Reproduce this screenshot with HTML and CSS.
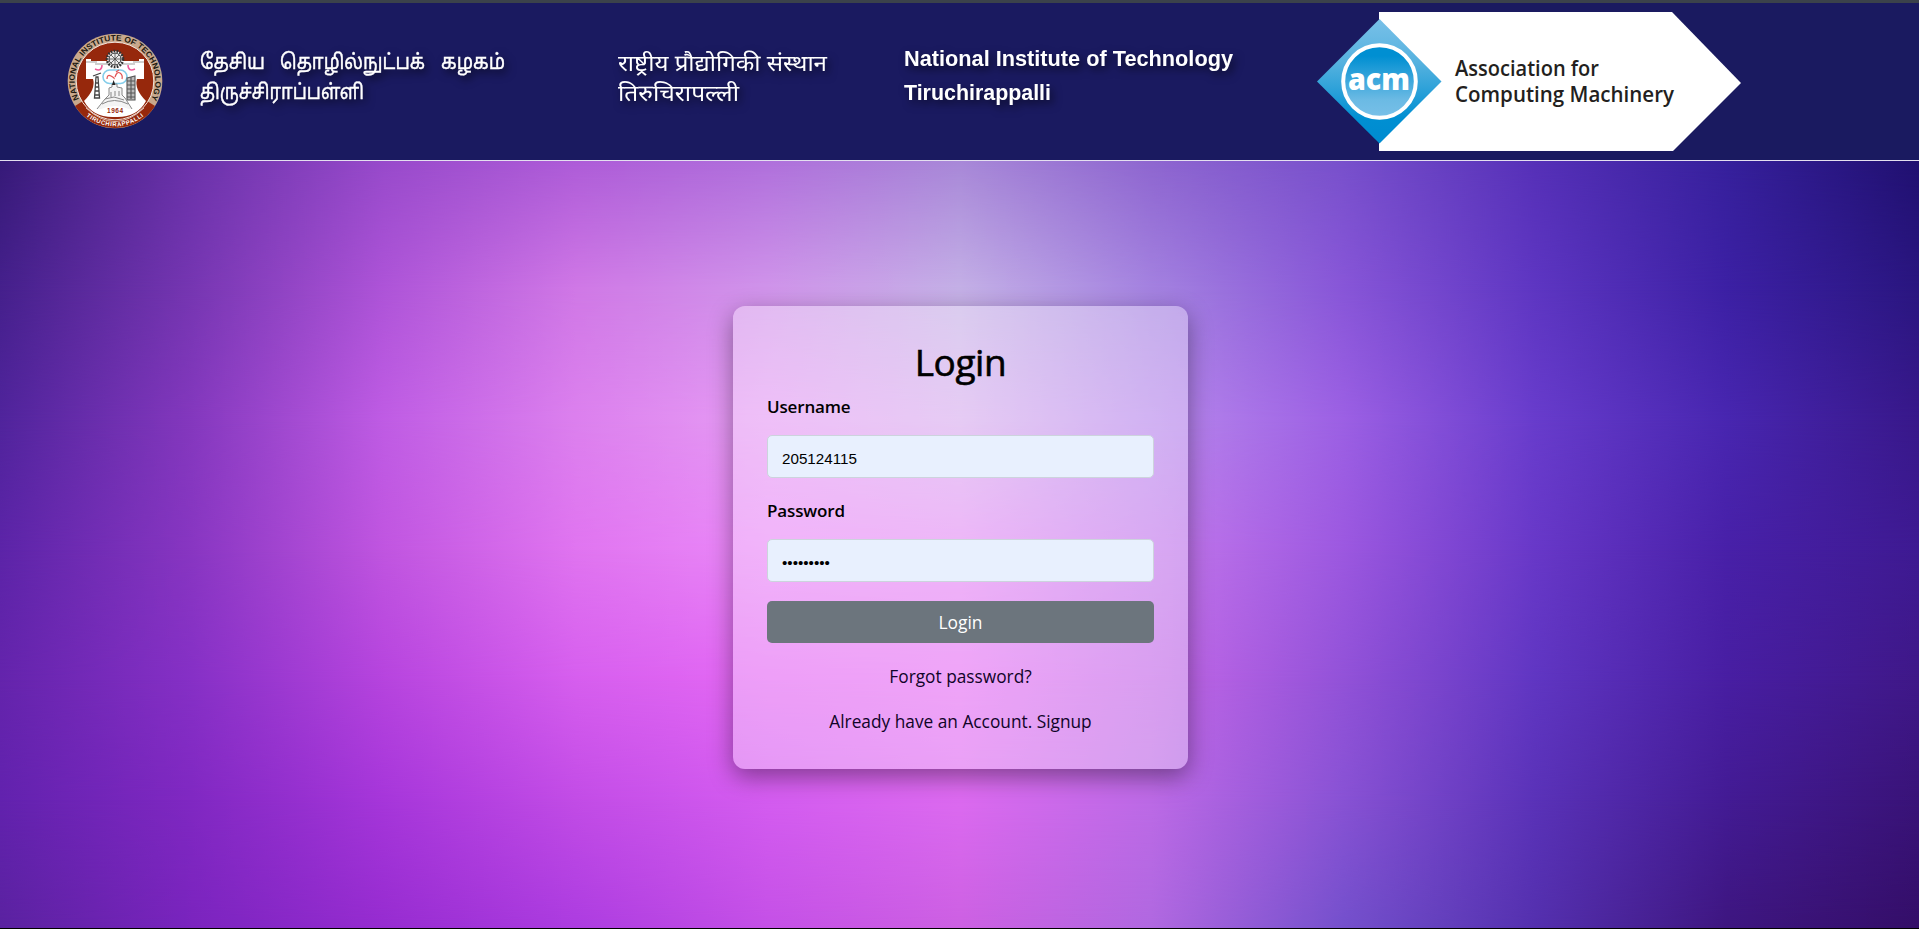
FILE: index.html
```html
<!DOCTYPE html>
<html lang="en">
<head>
<meta charset="utf-8">
<title>Login</title>
<link rel="stylesheet" href="styles.css">
</head>
<body>
<header class="banner">
  <svg class="seal" viewBox="0 0 96 96">
    <defs>
      <path id="arc-top" d="M12.500 67A40.300 40.300 0 1 1 83.500 67"/>
      <path id="arc-bottom" d="M10 72.500A45 45 0 0 0 86 72.500"/>
    </defs>
    <circle cx="48" cy="48" r="47.300" fill="#c8a88c"/>
    <path d="M8 73A47.300 47.300 0 0 0 88 73L80 68L16 68Z" fill="#96280c"/>
    <circle cx="48" cy="48" r="38.800" fill="#96280c" stroke="#f2e4dc" stroke-width="1"/>
    <path d="M19 26H24V28H72V26H77V46H70Q67 56 79 68Q70 85 48 84Q26 85 17 68Q29 56 26 46H19Z" fill="#fff"/>
    <path d="M19 29h11m36 0h11M28 31h40" stroke="#777" stroke-width=".7" fill="none"/>
    <circle cx="48" cy="26" r="8" fill="#fff" stroke="#333" stroke-width="2.600" stroke-dasharray="1.8 1.2"/>
    <circle cx="48" cy="26" r="6" fill="#eee" stroke="#333"/>
    <path d="M42 26h12M48 20v12M44 22l8 8M52 22l-8 8" stroke="#444" stroke-width=".8"/>
    <path d="M28 36q7 3 7-4M61 32q0 7 7 4" stroke="#ee5a9c" stroke-width="1.500" fill="none"/>
    <rect x="36" y="37" width="24" height="13.500" rx="6.700" fill="#fff" stroke="#84cdea" stroke-width="1.600"/>
    <path d="M40 46q0-5 4-3t3 3m1-2q2-6 5-4t2 6m-6-7 3-2" stroke="#e25454" stroke-width="1.200" fill="none"/>
    <path d="M29 44l-1.500 21h5l-1.500-21zM26 43l8-3M28 50h4M28 54h4M28 58h4M28 62h4" stroke="#444" stroke-width="1.300" fill="none"/>
    <path d="M60 45l8-2v24h-8zM60 48h8M60 52h8M60 56h8M60 60h8M60 64h8M64 44v22" stroke="#555" stroke-width="1.100" fill="#bbb"/>
    <path d="M30 76l8-10 4-4v-7l3-1v-3h5v3l5 1v7l3 3 7 11M38 66l9-2 10 3M35 71q12-7 26 0M44 59v5m4-6v5m4-5v5" stroke="#888" stroke-width="1" fill="#f4f4f4"/>
    <path d="M45 52l1.600-5 1.800 5z" fill="#222"/>
    <path d="M34 76q14-6 28 0v5q-14 4-28 0z" fill="#fff"/>
    <text class="seal-year" x="40" y="79.500" textLength="16">1964</text>
    <path d="M19 75Q48 102 77 75" fill="none" stroke="#f2e4dc" stroke-width=".8"/>
    <text class="seal-name"><textPath href="#arc-top" startOffset="1" textLength="164" lengthAdjust="spacingAndGlyphs">NATIONAL INSTITUTE OF TECHNOLOGY</textPath></text>
    <text class="seal-city"><textPath href="#arc-bottom" startOffset="14" textLength="62">TIRUCHIRAPPALLI</textPath></text>
  </svg>
  <svg class="name name-tamil" viewBox="0 0 320 90">
    <text x="0" y="34" textLength="65" lengthAdjust="spacingAndGlyphs">தேசிய</text>
    <text x="80" y="34" textLength="145" lengthAdjust="spacingAndGlyphs">தொழில்நுட்பக்</text>
    <text x="241" y="34" textLength="64" lengthAdjust="spacingAndGlyphs">கழகம்</text>
    <text x="0" y="63.500" textLength="164" lengthAdjust="spacingAndGlyphs">திருச்சிராப்பள்ளி</text>
  </svg>
  <svg class="name name-hindi" viewBox="0 0 230 90">
    <text x="0" y="35.500" textLength="209" lengthAdjust="spacingAndGlyphs">राष्ट्रीय प्रौद्योगिकी संस्थान</text>
    <text x="0" y="65.500" textLength="121" lengthAdjust="spacingAndGlyphs">तिरुचिरापल्ली</text>
  </svg>
  <svg class="name name-english" viewBox="0 0 350 90">
    <text x="0" y="31" textLength="329" lengthAdjust="spacingAndGlyphs">National Institute of Technology</text>
    <text x="0" y="65" textLength="147" lengthAdjust="spacingAndGlyphs">Tiruchirappalli</text>
  </svg>
  <svg class="acm" viewBox="0 0 424 139">
    <defs>
      <linearGradient id="diamond" x1="0" y1="0" x2="0" y2="1">
        <stop offset="0" stop-color="#78c0e8"/><stop offset=".35" stop-color="#56b2df"/>
        <stop offset=".8" stop-color="#008fd2"/><stop offset="1" stop-color="#008bd0"/>
      </linearGradient>
      <linearGradient id="disc" x1="0" y1="0" x2="0" y2="1">
        <stop offset=".15" stop-color="#008fd2"/><stop offset=".75" stop-color="#6bbae4"/><stop offset="1" stop-color="#78c0e8"/>
      </linearGradient>
    </defs>
    <path d="M62 0H355L424 71L356 139H62Z" fill="#fff"/>
    <path d="M62.500 7L124.500 69.500L62.500 131.500L0 69.500Z" fill="url(#diamond)"/>
    <circle cx="62.500" cy="69.500" r="36.300" fill="url(#disc)" stroke="#fff" stroke-width="4"/>
    <text class="acm-mark" x="31" y="77.500" textLength="62" lengthAdjust="spacingAndGlyphs">acm</text>
    <text class="acm-name" x="138" y="64" textLength="144" lengthAdjust="spacingAndGlyphs">Association for</text>
    <text class="acm-name" x="138" y="90" textLength="219" lengthAdjust="spacingAndGlyphs">Computing Machinery</text>
  </svg>
</header>
<main class="stage">
  <div class="glow glow-1"></div>
  <div class="glow glow-2"></div>
  <div class="glow glow-3"></div>
  <div class="glow glow-4"></div>
  <div class="glow glow-5"></div>
  <div class="glow glow-6"></div>
  <form class="card">
    <h1 class="title">Login</h1>
    <label class="label" for="user">Username</label>
    <input class="field" id="user" type="text" value="205124115">
    <label class="label label-pass" for="pass">Password</label>
    <input class="field" id="pass" type="password" value="123456789">
    <button class="submit" type="button">Login</button>
    <a class="link forgot">Forgot password?</a>
    <a class="link signup">Already have an Account. Signup</a>
  </form>
</main>
</body>
</html>
```
FILE: styles.css
```css
* { box-sizing: border-box; }
body {
  margin: 0;
  height: 929px;
  overflow: hidden;
  display: flex;
  flex-direction: column;
  background: #000;
  font-family: "Open Sans", "Noto Sans", sans-serif;
}
.banner {
  flex: none;
  height: 161px;
  display: flex;
  align-items: flex-start;
  background: #1a1a60;
  border-top: 3px solid #3b424b;
  border-bottom: 1px solid #e4dff0;
}
.banner svg { flex: none; display: block; overflow: visible; }
.seal { width: 96px; height: 96px; margin: 30px 0 0 67px; }
.seal text { font-family: "Liberation Sans", Arial, sans-serif; font-weight: 700; }
.seal-name { font-size: 8px; fill: #201810; }
.seal-city { font-size: 6px; fill: #fff; }
.seal-year { font-size: 6.5px; fill: #96280c; }
.name { height: 90px; margin-top: 32px; fill: #fff; filter: drop-shadow(3px 4px 4px rgba(0, 0, 0, .6)); }
.name-tamil { width: 320px; margin-left: 37px; font: 21px "Noto Sans Tamil", "Noto Sans", sans-serif; stroke: #fff; stroke-width: .4px; }
.name-hindi { width: 230px; margin-left: 98px; font: 23px "Noto Sans Devanagari", "Noto Sans", sans-serif; }
.name-english { width: 350px; margin-left: 56px; font: 700 22px "Liberation Sans", Arial, sans-serif; }
.acm { width: 424px; height: 139px; margin: 9px 0 0 63px; }
.acm-mark { font: 800 30px "Open Sans", sans-serif; fill: #fff; }
.acm-name { font: 600 22px "Open Sans", sans-serif; fill: #231f20; }

/* Colour field: each band is a horizontal ramp that fades in over the one above it. */
.stage {
  position: relative;
  height: 767px;
  display: flex;
  justify-content: center;
  align-items: flex-start;
  overflow: hidden;
  background: linear-gradient(90deg, #361a78, #6a32aa, #984acb, #ae5cd8, #b070dc, #a888d8, #8e66d0, #7850cc, #5630b8, #36209c, #201070);
}
.glow { position: absolute; inset: 0; }
.glow-1 {
  background: linear-gradient(90deg, #45208c, #7636b2, #ae54d8, #d078e6, #d094ea, #c4b0e6, #a482e0, #8856d8, #5e36c2, #3c20a4, #2a1680);
  mask-image: linear-gradient(transparent 0, #000 129px);
}
.glow-2 {
  background: linear-gradient(90deg, #50249c, #8438be, #bf5ce4, #dc80ee, #e69cf4, #d8aeee, #b888ec, #9c60e4, #683ccc, #4826b0, #38188a);
  mask-image: linear-gradient(transparent 129px, #000 259px);
}
.glow-3 {
  background: linear-gradient(90deg, #5c24a8, #8836c2, #c055e0, #e074f0, #ea88f8, #e48cf4, #c478ec, #9c58e0, #6838c8, #4820a8, #3e1a92);
  mask-image: linear-gradient(transparent 259px, #000 389px);
}
.glow-4 {
  background: linear-gradient(90deg, #6424ac, #8630c6, #b644de, #d65eee, #e468f4, #e670f4, #c468e8, #9252d8, #6036c2, #481ea2, #3f1888);
  mask-image: linear-gradient(transparent 389px, #000 519px);
}
.glow-5 {
  background: linear-gradient(90deg, #6222ae, #8028c2, #a636da, #c24ce6, #d45cf0, #dc6af0, #bc6ae6, #8852d4, #5a32b8, #431b94, #391378);
  mask-image: linear-gradient(transparent 519px, #000 639px);
}
.glow-6 {
  background: linear-gradient(90deg, #5a22a0, #7a24be, #962cd0, #ac3ce0, #c450e6, #cc60e2, #b068e0, #7450cc, #5430ae, #3e1680, #340e68);
  mask-image: linear-gradient(transparent 639px, #000 767px);
}
.card {
  position: relative;
  width: 455px;
  height: 463px;
  margin: 145px 0 0 2px;
  padding: 34px;
  display: flex;
  flex-direction: column;
  border-radius: 12px;
  background: rgba(255, 255, 255, .36);
  box-shadow: 0 8px 24px rgba(0, 0, 0, .4);
  color: #000;
}
.title {
  margin: -2px 0 9px;
  text-align: center;
  font-size: 37px;
  font-weight: 500;
  line-height: 47px;
  letter-spacing: -.4px;
  -webkit-text-stroke: .6px #000;
}
.label { height: 27px; margin-bottom: 15px; font-size: 17px; font-weight: 600; line-height: 25px; letter-spacing: -.15px; }
.field {
  width: 387px;
  height: 43px;
  margin-top: -1px;
  padding: 3px 14px 0;
  border: 1px solid #ccd3dd;
  border-radius: 5px;
  background: #e8f0fe;
  color: #000;
  font: 15.2px "Liberation Sans", Arial, sans-serif;
}
.label-pass { margin-top: 20px; }
.submit {
  height: 42px;
  margin-top: 19px;
  padding: 0;
  border: 0;
  border-radius: 5px;
  background: #6c757d;
  color: #fff;
  font: 17.4px/42px "Open Sans", "Noto Sans", sans-serif;
}
.link { height: 27px; text-align: center; font-size: 17.3px; line-height: 27px; color: #100428; }
.forgot { margin-top: 20px; }
.signup { margin-top: 18px; }
```
